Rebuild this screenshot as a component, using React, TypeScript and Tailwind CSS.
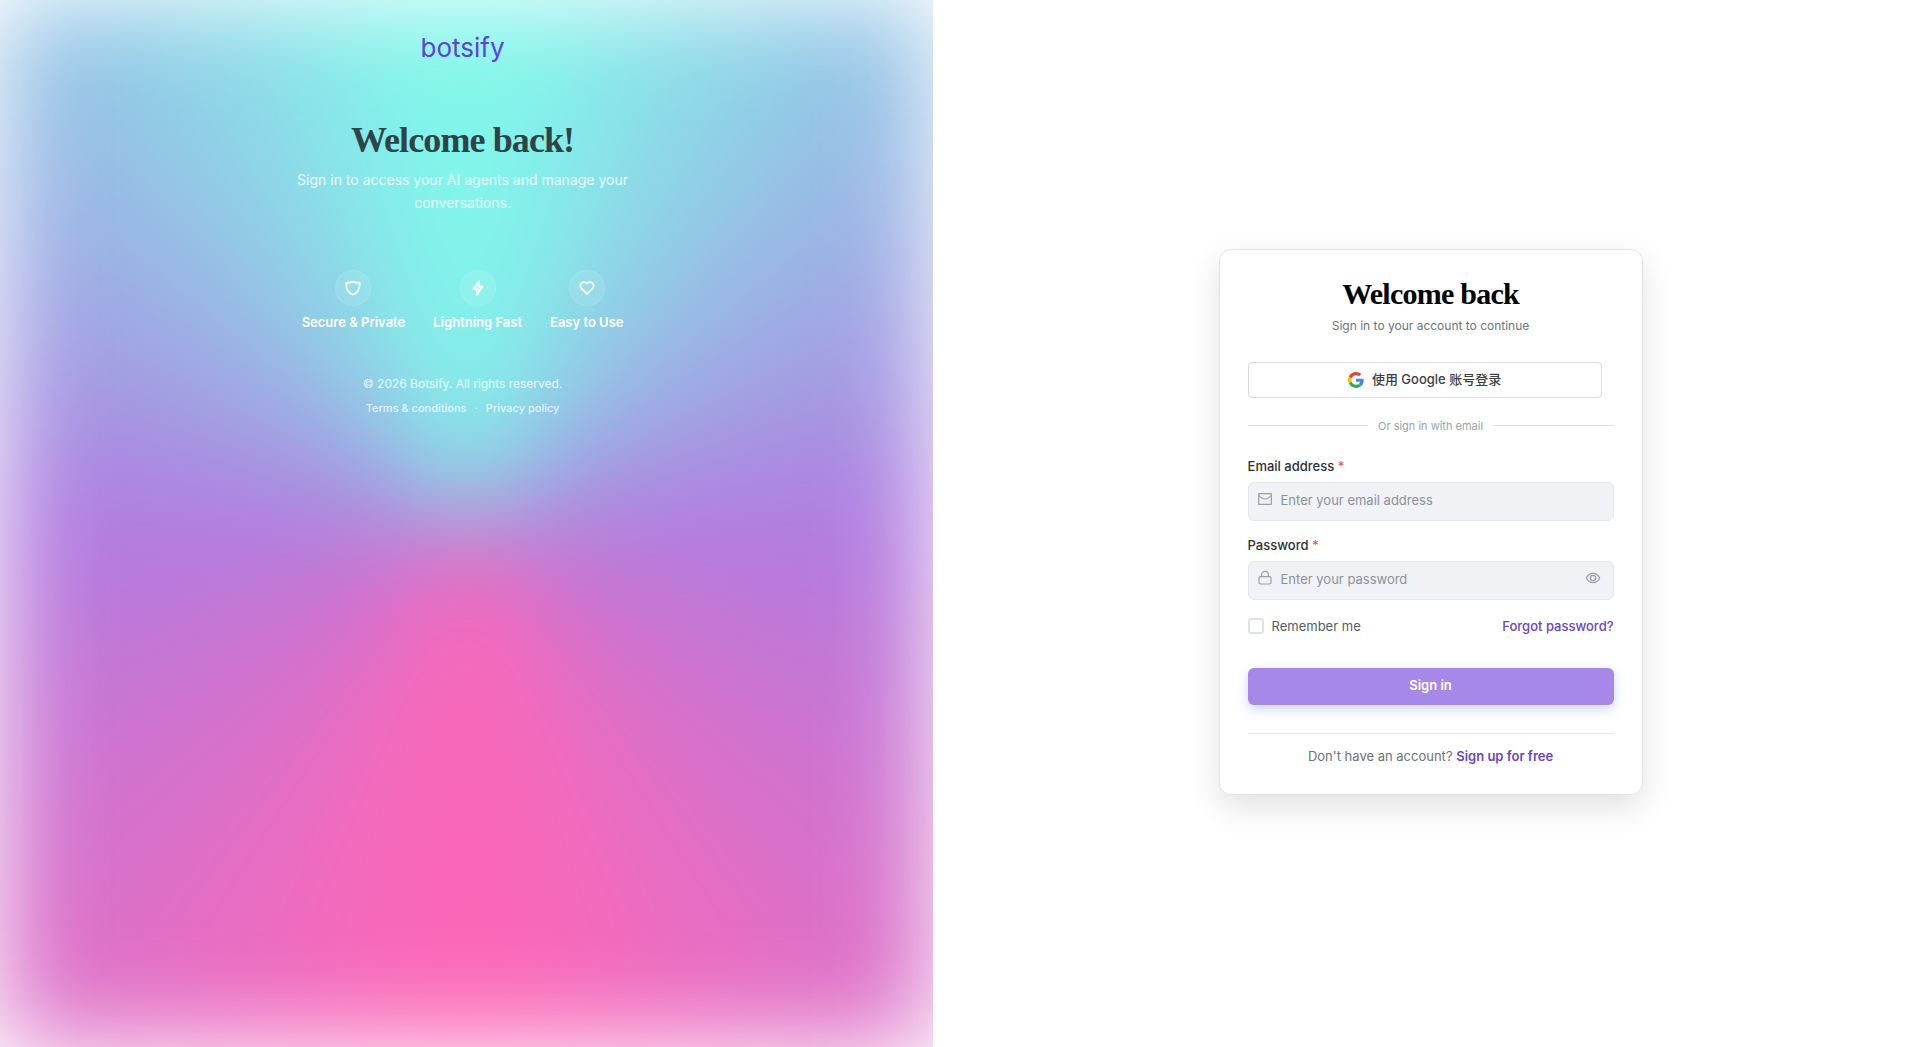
import { useState } from "react";
import type { ReactNode } from "react";

function Feature({ label, children }: { label: string; children: ReactNode }) {
  return (
    <li className="flex flex-col items-center gap-1.5">
      <span className="flex size-9 items-center justify-center rounded-full border border-white/10 bg-white/10 text-white">
        {children}
      </span>
      <span className="text-[13px] leading-5 font-semibold text-white">{label}</span>
    </li>
  );
}

const stroke = {
  viewBox: "0 0 24 24",
  fill: "none",
  stroke: "currentColor",
  strokeLinecap: "round",
  strokeLinejoin: "round",
} as const;

function BrandPanel() {
  return (
    <section className="relative w-[48.6%] shrink-0 overflow-hidden bg-white">
      <div className="absolute inset-0 bg-[conic-gradient(at_50%_50%,#80f8ea_0deg,#82f5ea_8deg,#b07ce0_90deg,#fb67b7_172deg,#fb67b7_188deg,#b07ce0_270deg,#82f5ea_352deg,#80f8ea_360deg)] blur-[50px]" />
      <div className="relative flex flex-col items-center pt-7.5 pr-2 text-center">
        <a href="#home" className="text-[26px] leading-9 text-[#5b45d6]">botsify</a>
        <h1 className="mt-12.5 font-['Liberation_Serif',serif] text-[36px] leading-12 font-bold tracking-tight text-[#2f4348]">
          Welcome back!
        </h1>
        <p className="mt-1 max-w-[340px] text-[14px] leading-[23px] text-white/80">
          Sign in to access your AI agents and manage your conversations.
        </p>
        <ul className="mt-14 flex gap-7">
          <Feature label="Secure & Private">
            <svg {...stroke} strokeWidth={2.4} className="size-[18px]"><path d="M12 3.500c-2.500 1.200-5 1.600-9 1.800C2.800 12 5.500 18.500 12 21c6.500-2.500 9.200-9 9-15.700-4-.2-6.500-.6-9-1.800z" /></svg>
          </Feature>
          <Feature label="Lightning Fast">
            <svg {...stroke} strokeWidth={2.400} className="size-[18px]"><path d="M13.500 3v7h4.500l-7.500 11v-8H6z" fill="currentColor" fillOpacity="0.35" /></svg>
          </Feature>
          <Feature label="Easy to Use">
            <svg {...stroke} strokeWidth={2.4} className="size-[18px]"><path d="M19.500 12.600 12 20l-7.500-7.400A5 5 0 1 1 12 6a5 5 0 1 1 7.500 6.600" /></svg>
          </Feature>
        </ul>
        <p className="mt-10 text-[12px] leading-6 text-white/80">© 2026 Botsify. All rights reserved.</p>
        <nav className="flex gap-2 text-[11px] leading-6 font-medium text-white/75">
          <a href="#terms">Terms &amp; conditions</a>
          <span>·</span>
          <a href="#privacy">Privacy policy</a>
        </nav>
      </div>
    </section>
  );
}

const fieldBox =
  "flex h-[39px] items-center rounded-md border border-[#e3e6ea] bg-[#f0f2f5] text-[#98a0a8]";
const fieldInput =
  "min-w-0 flex-1 bg-transparent text-[13px] text-gray-800 outline-none placeholder:text-[#8a9299]";

function LoginCard() {
  const [visible, setVisible] = useState(false);
  return (
    <form
      onSubmit={(e) => e.preventDefault()}
      className="w-full max-w-[424px] rounded-xl border border-[#e2e4e6] bg-white px-7 pt-6 pb-7 shadow-[0_12px_32px_rgba(0,0,0,0.12)]"
    >
      <h2 className="text-center font-['Liberation_Serif',serif] text-[30px] leading-10 font-bold tracking-tight text-black">
        Welcome back
      </h2>
      <p className="text-center text-[12px] leading-6 text-[#6b7378]">Sign in to your account to continue</p>

      <button type="button" className="mt-6 mr-3 flex h-9 w-[calc(100%-12px)] items-center justify-center gap-2 rounded border border-[#dadce0] text-[13px] font-medium text-[#3c4043]">
        <svg viewBox="0 0 48 48" className="size-4">
          <path fill="#EA4335" d="M24 9.500c3.540 0 6.710 1.220 9.210 3.600l6.850-6.850C35.900 2.380 30.470 0 24 0 14.620 0 6.510 5.380 2.560 13.220l7.980 6.190C12.430 13.720 17.740 9.500 24 9.500z" />
          <path fill="#4285F4" d="M46.980 24.550c0-1.570-.15-3.090-.38-4.550H24v9.020h12.940c-.58 2.960-2.260 5.480-4.780 7.180l7.730 6c4.510-4.180 7.090-10.360 7.090-17.650z" />
          <path fill="#FBBC05" d="M10.530 28.590c-.48-1.450-.76-2.990-.76-4.590s.27-3.140.76-4.590l-7.980-6.190C.92 16.460 0 20.120 0 24c0 3.880.92 7.540 2.560 10.780l7.970-6.190z" />
          <path fill="#34A853" d="M24 48c6.480 0 11.930-2.130 15.890-5.810l-7.730-6c-2.150 1.450-4.920 2.300-8.160 2.300-6.260 0-11.570-4.220-13.470-9.910l-7.980 6.190C6.510 42.620 14.620 48 24 48z" />
        </svg>
        <span>使用 Google 账号登录</span>
      </button>

      <div className="mt-5 flex items-center gap-2.5 text-[11px] leading-4 text-[#9aa1a8]">
        <span className="h-px flex-1 bg-[#e1e4e7]" />
        <span>Or sign in with email</span>
        <span className="h-px flex-1 bg-[#e1e4e7]" />
      </div>

      <label htmlFor="email" className="mt-5 block text-[13px] leading-6 font-medium text-[#2b3036]">
        Email address <span className="text-[#e0566f]">*</span>
      </label>
      <div className={`${fieldBox} mt-1`}>
        <svg {...stroke} strokeWidth={1.800} className="mb-1 ml-2 size-4"><path d="M2.500 4h19v16h-19zM2.500 6c3 4 6 6 9.500 6s6.500-2 9.500-6" /></svg>
        <input id="email" type="email" placeholder="Enter your email address" className={`${fieldInput} ml-2`} />
      </div>

      <label htmlFor="password" className="mt-3 block text-[13px] leading-6 font-medium text-[#2b3036]">
        Password <span className="text-[#e0566f]">*</span>
      </label>
      <div className={`${fieldBox} mt-1`}>
        <svg {...stroke} strokeWidth={1.800} className="mb-1 ml-2 size-4"><rect x="3" y="10" width="18" height="11" rx="2.500" /><path d="M7 10V7a5 5 0 0 1 10 0v3" /></svg>
        <input id="password" type={visible ? "text" : "password"} placeholder="Enter your password" className={`${fieldInput} ml-2`} />
        <button type="button" aria-label="Show password" onClick={() => setVisible(!visible)} className="mr-3 mb-1">
          <svg {...stroke} strokeWidth={2} className="size-4"><path d="M2 12c2-4 5.500-7 10-7s8 3 10 7c-2 4-5.500 7-10 7s-8-3-10-7z" /><circle cx="12" cy="12" r="4" /></svg>
        </button>
      </div>

      <div className="mt-3.5 flex items-center justify-between text-[13px] leading-6">
        <label className="flex items-center gap-2 text-[#565d62]">
          <input type="checkbox" className="size-4 appearance-none rounded-[3px] border-2 border-[#dfe2e5] bg-white checked:bg-[#6b46c1]" />
          Remember me
        </label>
        <a href="#forgot" className="font-medium text-[#6b46c1]">Forgot password?</a>
      </div>

      <button type="submit" className="mt-7.5 h-[37px] w-full rounded-md bg-[#a688e8] text-[13px] font-semibold text-white shadow-[0_4px_12px_rgba(80,120,255,0.3)]">
        Sign in
      </button>

      <p className="mt-7 border-t border-[#e5e7ea] pt-3 text-center text-[13px] leading-5 text-[#6b7378]">
        Don't have an account? <a href="#signup" className="font-semibold text-[#6b46c1]">Sign up for free</a>
      </p>
    </form>
  );
}

export default function App() {
  return (
    <div className="flex min-h-screen bg-white font-['Inter','Noto_Sans_CJK_SC',sans-serif]">
      <BrandPanel />
      <main className="flex flex-1 items-center justify-center pb-1 pl-2">
        <LoginCard />
      </main>
    </div>
  );
}
